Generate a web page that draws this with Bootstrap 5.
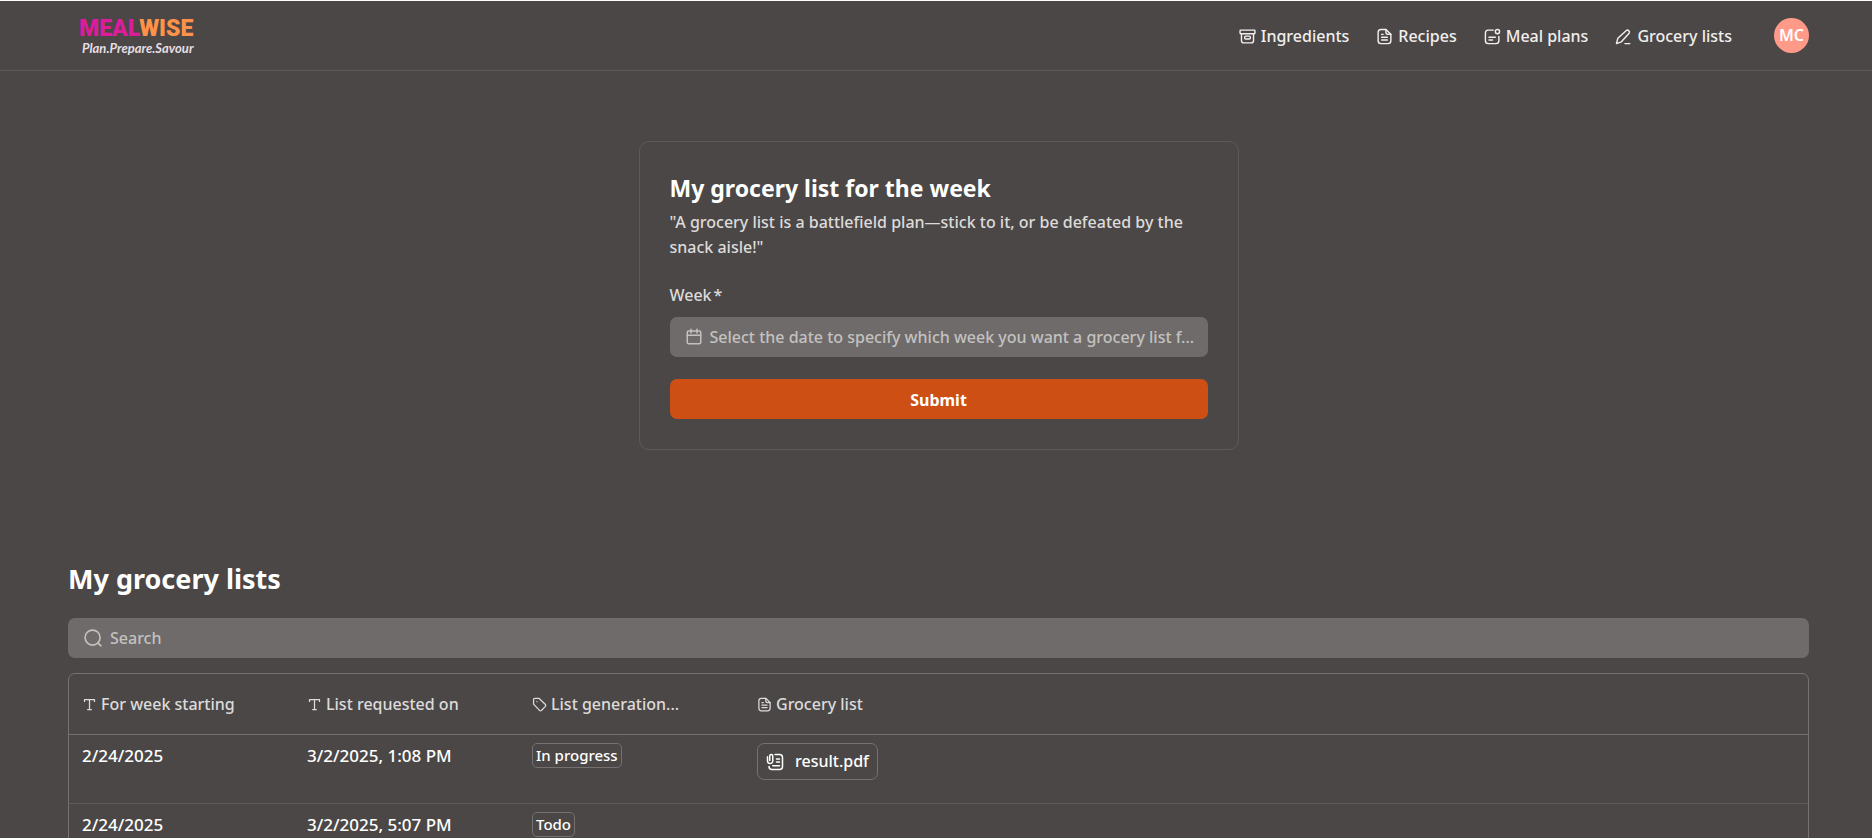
<!DOCTYPE html>
<html lang="en">
<head>
<meta charset="utf-8">
<meta name="viewport" content="width=device-width, initial-scale=1">
<title>Mealwise – Grocery lists</title>
<link href="https://cdn.jsdelivr.net/npm/bootstrap@5.3.0/dist/css/bootstrap.min.css" rel="stylesheet">
<style>
  :root {
    --mw-bg: #4b4746;
    --mw-field: #6f6b6a;
    --mw-line: #5e5a58;
    --mw-line-strong: #757170;
    --mw-text: #ffffff;
    --mw-soft: #dddbda;
    --mw-muted: #c3c1c0;
    --mw-accent: #cd4f13;
  }
  body {
    background: var(--mw-bg);
    color: var(--mw-text);
    font-family: "Noto Sans", sans-serif;
    font-size: 16px;
    font-weight: 500;
    line-height: 25px;
  }
  svg { fill: none; stroke: currentColor; stroke-width: 2; stroke-linecap: round; stroke-linejoin: round; flex: none; }
  .page-gutter { padding-left: 68px; padding-right: 63px; }

  .topbar { border-top: 1px solid #fff; border-bottom: 1px solid var(--mw-line); padding-top: 0; padding-bottom: 0; min-height: 71px; }
  .brand { margin-left: 11px; text-decoration: none; }
  .brand-name { font: 900 23px/24px Roboto, sans-serif; color: #dd1c9b; }
  .brand-name span { color: #fd9248; }
  .brand-tag { font: italic 700 13px/14px Lato, sans-serif; color: #e6dfe3; padding-left: 3px; }
  .menu { gap: 27px; }
  .menu .nav-link { display: flex; align-items: center; gap: 5px; padding: 1px 0 0; color: #f1efee; }
  .menu .nav-link:hover { color: #fff; }
  .avatar { width: 35px; height: 35px; margin-left: 15px; border: 0; border-radius: 50%; padding: 0; background: #ff9a89; color: #fff; font-size: 16px; font-weight: 600; }

  .request-card { max-width: 600px; margin: 70px auto 0; padding: 30px; background: none; border: 1px solid var(--mw-line); border-radius: 10px; color: inherit; }
  .request-card h1 { font-size: 23px; line-height: 32px; font-weight: 700; margin: 0 0 6px; }
  .soft { color: var(--mw-soft); }
  .request-card p { margin: 0 0 23px; }
  .request-card label { display: block; margin-bottom: 9px; }
  .required-mark { margin-left: 2px; }
  .field { display: flex; align-items: center; height: 40px; padding: 0 8px 0 15px; background: var(--mw-field); border-radius: 7px; color: var(--mw-muted); }
  .field .form-control { background: none; border: 0; box-shadow: none; padding: 0 0 0 7px; color: #fff; font-size: 16px; font-weight: 500; line-height: 24px; text-overflow: ellipsis; min-width: 0; }
  .field .form-control::placeholder { color: var(--mw-muted); opacity: 1; }
  .btn-submit { height: 40px; margin-top: 22px; padding: 2px 0 0; border: 0; border-radius: 7px; background: var(--mw-accent); color: #fff; font-size: 16px; font-weight: 700; }
  .btn-submit:hover { background: #b94610; color: #fff; }

  .lists-title { font-size: 27px; line-height: 36px; font-weight: 700; margin: 111px 0 21px; }
  .grid-frame { margin-top: 15px; border: 1px solid var(--mw-line-strong); border-radius: 7px; overflow: hidden; }
  .grid-table { width: 100%; table-layout: fixed; border-collapse: separate; border-spacing: 0; }
  .grid-table col.data-col { width: 225px; }
  .grid-table th { height: 61px; padding: 0 13px; border-bottom: 1px solid var(--mw-line-strong); font-weight: 500; line-height: 24px; vertical-align: middle; }
  .grid-table th div { display: flex; align-items: center; gap: 4px; white-space: nowrap; }
  .grid-table td { height: 69px; padding: 8px 13px; border-bottom: 1px solid var(--mw-line); font-size: 17px; line-height: 25px; vertical-align: top; white-space: nowrap; }
  .grid-table tr:last-child td { border-bottom: 0; }
  .state { display: inline-block; vertical-align: top; padding: 0 3px; border: 1px solid var(--mw-line-strong); border-radius: 5px; font-size: 15px; line-height: 23px; }
  .file-link { display: inline-flex; align-items: center; vertical-align: top; gap: 11px; height: 37px; padding: 0 8px; border: 1px solid var(--mw-line-strong); border-radius: 7px; color: #fff; font-size: 16px; text-decoration: none; }
</style>
</head>
<body>

<nav class="navbar topbar page-gutter">
  <a class="brand d-flex flex-column" href="#">
    <span class="brand-name">MEAL<span>WISE</span></span>
    <span class="brand-tag">Plan.Prepare.Savour</span>
  </a>
  <div class="menu d-flex align-items-center flex-wrap">
    <a class="nav-link" href="#"><svg width="17" height="17" viewBox="0 0 24 24" aria-hidden="true"><rect x="1.500" y="3" width="21" height="5" rx="1"/><path d="M3.500 8v10a3 3 0 0 0 3 3h11a3 3 0 0 0 3-3V8"/><rect x="8" y="11.500" width="8" height="4" rx="1.500"/></svg>Ingredients</a>
    <a class="nav-link" href="#"><svg width="17" height="17" viewBox="0 0 24 24" aria-hidden="true"><path d="M14 2H7a4 4 0 0 0-4 4v12a4 4 0 0 0 4 4h10a4 4 0 0 0 4-4V9z"/><path d="M14 2v4a3 3 0 0 0 3 3h4M8 9h2M8 13h8M8 17h8"/></svg>Recipes</a>
    <a class="nav-link" href="#"><svg width="17" height="17" viewBox="0 0 24 24" aria-hidden="true"><path d="M13 3H6a4 4 0 0 0-4 4v11a4 4 0 0 0 4 4h11a4 4 0 0 0 4-4v-6M7 13h9M7 17h5"/><circle cx="19" cy="5" r="3"/></svg>Meal plans</a>
    <a class="nav-link" href="#"><svg width="17" height="17" viewBox="0 0 24 24" aria-hidden="true"><path d="M4 14.500 16 3.500c2-1.800 5.500 1 4 3.800L9 19.500l-7 2.500zM14 22h7"/></svg>Grocery lists</a>
    <button class="avatar" type="button" aria-label="Account MC">MC</button>
  </div>
</nav>

<main class="page-gutter">
  <form class="card request-card">
    <h1>My grocery list for the week</h1>
    <p class="soft">"A grocery list is a battlefield plan—stick to it, or be defeated by the snack aisle!"</p>
    <label class="soft" for="week">Week<span class="required-mark">*</span></label>
    <div class="field">
      <svg width="18" height="18" viewBox="0 0 24 24" aria-hidden="true"><rect x="3" y="4" width="18" height="17" rx="2"/><path d="M3 9.500h18M8 1.500v5M16 1.500v5"/></svg>
      <input class="form-control" id="week" type="text" placeholder="Select the date to specify which week you want a grocery list f...">
    </div>
    <button class="btn btn-submit w-100" type="submit">Submit</button>
  </form>

  <section>
    <h2 class="lists-title">My grocery lists</h2>
    <div class="field">
      <svg width="20" height="20" viewBox="0 0 24 24" aria-hidden="true"><circle cx="11.500" cy="11.500" r="9"/><path d="m18.500 18.500 3 3"/></svg>
      <input class="form-control" type="search" placeholder="Search" aria-label="Search">
    </div>

    <div class="grid-frame">
      <table class="grid-table">
        <colgroup><col class="data-col"><col class="data-col"><col class="data-col"><col></colgroup>
        <thead>
          <tr class="soft">
            <th scope="col"><div><svg width="15" height="15" viewBox="0 0 24 24" aria-hidden="true"><path d="M4 7V4h16v3M12 4v16M9 20h6"/></svg>For week starting</div></th>
            <th scope="col"><div><svg width="15" height="15" viewBox="0 0 24 24" aria-hidden="true"><path d="M4 7V4h16v3M12 4v16M9 20h6"/></svg>List requested on</div></th>
            <th scope="col"><div><svg width="15" height="15" viewBox="0 0 24 24" aria-hidden="true"><path d="M2.500 4a2 2 0 0 1 2-2H11l10.500 10a2.500 2.500 0 0 1 0 3L15 21.500a2.500 2.500 0 0 1-3 0L2.500 11.500zM8 7.500v.010"/></svg>List generation...</div></th>
            <th scope="col"><div><svg width="15" height="15" viewBox="0 0 24 24" aria-hidden="true"><path d="M14 2H7a4 4 0 0 0-4 4v12a4 4 0 0 0 4 4h10a4 4 0 0 0 4-4V9z"/><path d="M14 2v4a3 3 0 0 0 3 3h4M8 9h2M8 13h8M8 17h8"/></svg>Grocery list</div></th>
          </tr>
        </thead>
        <tbody>
          <tr>
            <td>2/24/2025</td>
            <td>3/2/2025, 1:08 PM</td>
            <td><span class="state">In progress</span></td>
            <td><a class="file-link" href="#"><svg width="18" height="18" viewBox="0 0 24 24" aria-hidden="true"><path d="M12 2h6a4 4 0 0 1 4 4v12a4 4 0 0 1-4 4H8a4 4 0 0 1-4-4M14 8h4M14 12h4M9 17h9"/><path d="M2 5v5.500a3.500 3.500 0 0 0 7 0V4a2 2 0 0 0-4 0v6"/></svg>result.pdf</a></td>
          </tr>
          <tr>
            <td>2/24/2025</td>
            <td>3/2/2025, 5:07 PM</td>
            <td><span class="state">Todo</span></td>
            <td></td>
          </tr>
        </tbody>
      </table>
    </div>
  </section>
</main>

<script src="https://cdn.jsdelivr.net/npm/bootstrap@5.3.0/dist/js/bootstrap.bundle.min.js"></script>
</body>
</html>
